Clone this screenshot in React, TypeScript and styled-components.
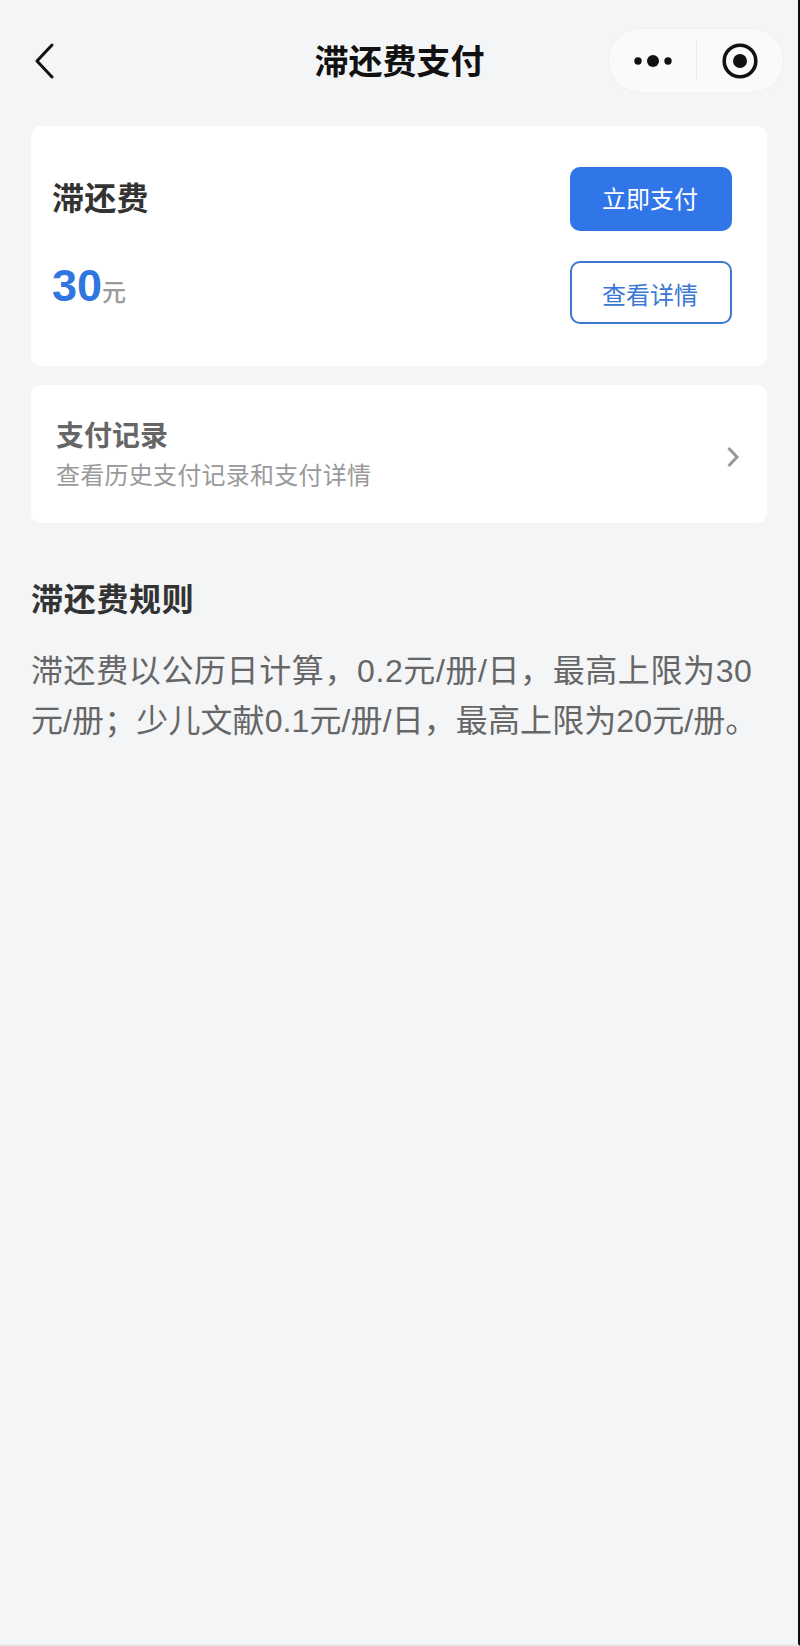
import styled, { createGlobalStyle } from "styled-components";

const GlobalStyle = createGlobalStyle`
  html, body {
    margin: 0;
    padding: 0;
    background: #f4f5f7;
  }
  * {
    box-sizing: border-box;
  }
`;

const Page = styled.div`
  width: 800px;
  height: 1646px;
  overflow: hidden;
  background: #f4f5f7;
  border-right: 2px solid #0c0c0c;
  border-bottom: 2px solid #e9eaec;
  font-family: "Liberation Sans", "Noto Sans CJK SC", sans-serif;
`;

const NavBar = styled.header`
  display: grid;
  grid-template-columns: 1fr auto 1fr;
  align-items: center;
  height: 64px;
  margin-top: 28px;
  padding: 0 14px 0 15px;
`;

const BackButton = styled.div`
  display: flex;
  align-items: center;
  padding-left: 19px;
  color: #111;
`;

const NavTitle = styled.h1`
  margin: 2px 0 0;
  font-size: 34px;
  font-weight: 700;
  line-height: 40px;
  color: #111;
`;

const Capsule = styled.div`
  justify-self: end;
  display: flex;
  align-items: center;
  width: 176px;
  height: 65px;
  border-radius: 32px;
  background: #fafafb;
  border: 1px solid #f0f1f3;
`;

const CapsuleSlot = styled.div<{ $width: number }>`
  display: flex;
  align-items: center;
  justify-content: center;
  width: ${(p) => p.$width}px;
  height: 100%;
`;

const CapsuleDivider = styled.div`
  width: 1px;
  height: 40px;
  background: #ececee;
`;

const Content = styled.main`
  display: flex;
  flex-direction: column;
  gap: 19px;
  padding: 34px 31px 0;
`;

const Card = styled.section`
  background: #fff;
  border-radius: 10px;
`;

const FeeCard = styled(Card)`
  display: flex;
  justify-content: space-between;
  align-items: stretch;
  height: 240px;
  padding: 41px 35px 42px 21px;
`;

const FeeInfo = styled.div`
  display: flex;
  flex-direction: column;
  justify-content: space-between;
  padding: 12px 0 8px;
`;

const FeeTitle = styled.h2`
  margin: 0;
  font-size: 32px;
  font-weight: 700;
  letter-spacing: 0.3px;
  line-height: 40px;
  color: #333;
`;

const FeeAmount = styled.div`
  display: flex;
  align-items: baseline;
  line-height: 46px;
`;

const AmountValue = styled.span`
  font-size: 45px;
  font-weight: 700;
  color: #3076e0;
`;

const AmountUnit = styled.span`
  font-size: 24px;
  font-weight: 500;
  color: #999;
`;

const Actions = styled.div`
  display: flex;
  flex-direction: column;
  gap: 30px;
`;

const ActionButton = styled.button<{ $primary?: boolean }>`
  width: 162px;
  height: ${(p) => (p.$primary ? 64 : 63)}px;
  padding: ${(p) => (p.$primary ? "0 2px 3px 0" : "1px 2px 0 0")};
  border-radius: 10px;
  border: 2px solid ${(p) => (p.$primary ? "#3076e8" : "#3a78d0")};
  background: ${(p) => (p.$primary ? "#3076e8" : "#fff")};
  color: ${(p) => (p.$primary ? "#fff" : "#3a78d4")};
  font-family: inherit;
  font-size: 24px;
`;

const RecordCard = styled(Card)`
  display: flex;
  align-items: center;
  justify-content: space-between;
  height: 138px;
  padding: 0 27px 0 25px;
`;

const RecordText = styled.div`
  display: flex;
  flex-direction: column;
  gap: 7px;
  padding-top: 2px;
`;

const RecordTitle = styled.h3`
  margin: 0;
  font-size: 28px;
  font-weight: 700;
  line-height: 34px;
  color: #666;
`;

const RecordSub = styled.p`
  margin: 0;
  font-size: 24px;
  letter-spacing: 0.25px;
  line-height: 30px;
  color: #999;
`;

const RecordArrow = styled.svg`
  margin-top: 5px;
`;

const RuleSection = styled.section`
  padding-top: 38px;
`;

const RuleTitle = styled.h2`
  margin: 0 0 26px;
  font-size: 32px;
  font-weight: 700;
  letter-spacing: 0.7px;
  line-height: 40px;
  color: #333;
`;

const RuleLine = styled.p<{ $tracking: number }>`
  margin: 0;
  font-size: 32px;
  letter-spacing: ${(p) => p.$tracking}px;
  line-height: 50px;
  white-space: nowrap;
  color: #666;
`;

export default function App() {
  return (
    <Page>
      <GlobalStyle />
      <NavBar>
        <BackButton>
          <svg width="20" height="36" viewBox="0 0 20 36" fill="none">
            <path d="M18 2 3 18l15 16" stroke="currentColor" strokeWidth="3" strokeLinecap="round" strokeLinejoin="round" />
          </svg>
        </BackButton>
        <NavTitle>滞还费支付</NavTitle>
        <Capsule>
          <CapsuleSlot $width={87}>
            <svg width="38" height="14" viewBox="0 0 38 14" fill="#111">
              <circle cx="4" cy="7" r="3.7" />
              <circle cx="19" cy="7" r="6" />
              <circle cx="34" cy="7" r="3.7" />
            </svg>
          </CapsuleSlot>
          <CapsuleDivider />
          <CapsuleSlot $width={86}>
            <svg width="36" height="36" viewBox="0 0 36 36" fill="none">
              <circle cx="18" cy="18" r="15.8" stroke="#111" strokeWidth="3.6" />
              <circle cx="18" cy="18" r="7" fill="#111" />
            </svg>
          </CapsuleSlot>
        </Capsule>
      </NavBar>
      <Content>
        <FeeCard>
          <FeeInfo>
            <FeeTitle>滞还费</FeeTitle>
            <FeeAmount>
              <AmountValue>30</AmountValue>
              <AmountUnit>元</AmountUnit>
            </FeeAmount>
          </FeeInfo>
          <Actions>
            <ActionButton $primary>立即支付</ActionButton>
            <ActionButton>查看详情</ActionButton>
          </Actions>
        </FeeCard>
        <RecordCard>
          <RecordText>
            <RecordTitle>支付记录</RecordTitle>
            <RecordSub>查看历史支付记录和支付详情</RecordSub>
          </RecordText>
          <RecordArrow width="14" height="20" viewBox="0 0 14 20" fill="none">
            <path d="M2.5 1 11 10 2.5 19" stroke="#999" strokeWidth="3" />
          </RecordArrow>
        </RecordCard>
        <RuleSection>
          <RuleTitle>滞还费规则</RuleTitle>
          <RuleLine $tracking={0.6}>滞还费以公历日计算，0.2元/册/日，最高上限为30</RuleLine>
          <RuleLine $tracking={0.1}>元/册；少儿文献0.1元/册/日，最高上限为20元/册。</RuleLine>
        </RuleSection>
      </Content>
    </Page>
  );
}
